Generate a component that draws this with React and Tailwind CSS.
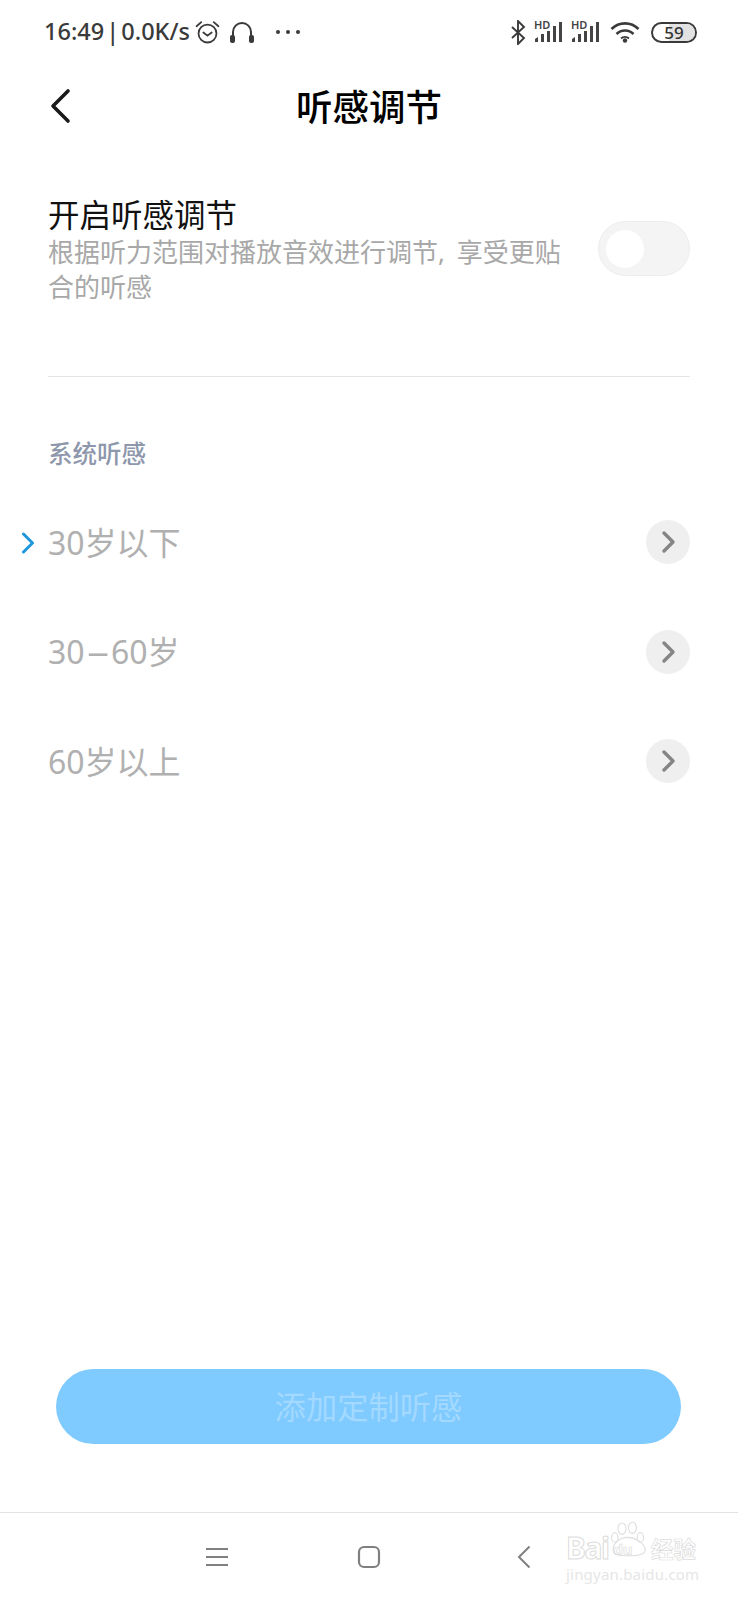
const FONT = "font-['Noto_Sans','Noto_Sans_CJK_SC',sans-serif]";

function Signal() {
  return (
    <div className="relative w-[28px] h-[22px]">
      <span className="absolute left-0 top-[-3px] text-[11px] leading-[14px] font-semibold text-[#444]">HD</span>
      <svg width="28" height="22" viewBox="0 0 28 22" className="absolute inset-0">
        <path d="M1 21v-3l3-2v5z" fill="#444" />
        <rect x="7" y="13" width="3" height="8" fill="#444" />
        <rect x="13" y="10" width="3" height="11" fill="#444" />
        <rect x="19" y="5" width="3" height="16" fill="#444" />
        <rect x="25" y="1" width="3" height="20" fill="#444" />
      </svg>
    </div>
  );
}

function StatusBar() {
  return (
    <div className="h-[64px] flex items-center pl-[44px] pr-[41px] text-[#3a3a3a] shrink-0">
      <span className="text-[23.5px] leading-none font-medium whitespace-nowrap w-[145px] [word-spacing:-4px]">16:49 | 0.0K/s</span>
      <svg width="25" height="25" viewBox="0 0 24 24" fill="none" stroke="#3a3a3a" strokeWidth="1.7" strokeLinecap="round" className="ml-[6px]">
        <circle cx="12" cy="13" r="8.6" />
        <path d="M8 12l4 3 4-3" />
        <path d="M1.5 6L6 2M22.5 6L18 2" />
      </svg>
      <svg width="26" height="24" viewBox="0 0 26 24" fill="none" className="ml-[9px]">
        <path d="M4 18V12a9 9 0 0 1 18 0v6" stroke="#3a3a3a" strokeWidth="2" />
        <rect x="1" y="15" width="5" height="8" rx="2" fill="#3a3a3a" />
        <rect x="20" y="15" width="5" height="8" rx="2" fill="#3a3a3a" />
      </svg>
      <svg width="26" height="6" viewBox="0 0 26 6" className="ml-[20px]">
        <circle cx="3" cy="3" r="2" fill="#3a3a3a" />
        <circle cx="13" cy="3" r="2" fill="#3a3a3a" />
        <circle cx="23" cy="3" r="2" fill="#3a3a3a" />
      </svg>
      <div className="ml-auto flex items-center">
        <svg width="15" height="25" viewBox="0 0 15 25" fill="none" stroke="#3a3a3a" strokeWidth="1.9">
          <path d="M1 7l12 11-6 6V1l6 6L1 18" />
        </svg>
        <div className="ml-[8px]"><Signal /></div>
        <div className="ml-[9px]"><Signal /></div>
        <svg width="30" height="22" viewBox="0 0 30 22" fill="none" stroke="#3a3a3a" strokeWidth="2.6" className="ml-[11px]">
          <path d="M1.5 8a19 19 0 0 1 27 0" />
          <path d="M6.5 13a12 12 0 0 1 17 0" />
          <path d="M11 17.5a6 6 0 0 1 8 0" strokeWidth="2" />
          <circle cx="15" cy="19.5" r="2.2" fill="#3a3a3a" stroke="none" />
        </svg>
        <div className="ml-[11px] w-[46px] h-[21px] rounded-full border-[2px] border-[#3a3a3a] relative overflow-hidden flex items-center justify-center">
          <div className="absolute right-0 top-0 bottom-0 w-[26px] bg-[#e2e2e2]" />
          <span className="relative text-[17px] leading-none font-medium text-[#333]">59</span>
        </div>
      </div>
    </div>
  );
}

function Row({ children, active }) {
  return (
    <div className="h-[109.5px] flex items-center justify-between relative">
      {active && (
        <svg width="14" height="22" viewBox="0 0 14 22" fill="none" stroke="#1f97dc" strokeWidth="3" strokeLinecap="round" strokeLinejoin="round" className="absolute left-[-27px] top-[44px]">
          <path d="M2.5 2l9 9-9 9" />
        </svg>
      )}
      <span className="text-[32px] leading-none text-[#b0b0b0] pt-[1px]">{children}</span>
      <div className="w-[44px] h-[44px] rounded-full bg-[#efefef] flex items-center justify-center">
        <svg width="16" height="24" viewBox="0 0 16 24" fill="none" stroke="#858585" strokeWidth="3.4" strokeLinecap="round" strokeLinejoin="round" className="ml-[2px]">
          <path d="M3 3l9 9-9 9" />
        </svg>
      </div>
    </div>
  );
}

function Watermark() {
  return (
    <div className="absolute left-[566px] top-[7px] w-[134px] h-[66px]">
      <svg width="40" height="38" viewBox="0 0 50 44" fill="none" stroke="#dedede" strokeWidth="1.4" className="absolute left-[44px] top-0">
        <ellipse cx="15" cy="9" rx="5" ry="7" />
        <ellipse cx="28" cy="8" rx="5" ry="7" />
        <ellipse cx="6" cy="20" rx="4" ry="6" />
        <ellipse cx="38" cy="20" rx="4" ry="6" />
        <path d="M4 36c0-10 9-16 18-16s22 7 22 16c0 6-11 7-21 7s-19-1-19-7z" />
      </svg>
      <div className="absolute left-0 top-[13px] flex items-start whitespace-nowrap">
        <span className="text-[30px] leading-none font-bold tracking-[-1.5px] text-transparent [-webkit-text-stroke:1px_#dcdcdc]">Bai</span>
        <span className="ml-[5px] mt-[9px] text-[15px] leading-none font-bold text-transparent [-webkit-text-stroke:0.7px_#dcdcdc]">du</span>
      </div>
      <span className="absolute left-[85px] top-[19px] text-[22.5px] leading-none font-bold text-transparent [-webkit-text-stroke:0.7px_#dcdcdc]">经验</span>
      <span className="absolute left-0 top-[47px] text-[15px] leading-none tracking-[0.2px] text-[#e6e6e6] whitespace-nowrap">jingyan.baidu.com</span>
    </div>
  );
}

export default function App() {
  return (
    <div className={`w-[738px] h-[1600px] bg-white flex flex-col overflow-hidden ${FONT}`}>
      <StatusBar />

      <div className="h-[86px] relative flex items-center justify-center shrink-0">
        <svg width="24" height="36" viewBox="0 0 24 36" fill="none" stroke="#1a1a1a" strokeWidth="3.6" strokeLinecap="round" strokeLinejoin="round" className="absolute left-[48px] top-[24px]">
          <path d="M20 3L5 18l15 15" />
        </svg>
        <h1 className="text-[36.5px] leading-none font-medium text-black pt-[1px]">听感调节</h1>
      </div>

      <div className="px-[48px] pt-[47px] shrink-0">
        <div className="flex items-start justify-between h-[180px] border-b border-[#e4e4e4]">
          <div className="w-[520px]">
            <div className="text-[31.5px] leading-[36px] text-[#111]">开启听感调节</div>
            <div className="text-[26px] leading-[35px] text-[#a8a8a8] mt-[2px] [word-spacing:5px]">根据听力范围对播放音效进行调节, 享受更贴合的听感</div>
          </div>
          <div className="w-[92px] h-[55px] rounded-[28px] bg-[#f4f4f4] border border-[#ededed] flex items-center pl-[7px] mt-[24px]">
            <div className="w-[38px] h-[38px] rounded-full bg-white" />
          </div>
        </div>

        <div className="text-[24.5px] leading-none font-medium text-[#8e97ab] mt-[65px]">系统听感</div>

        <div className="mt-[21px]">
          <Row active>30岁以下</Row>
          <Row>30<span className="inline-block px-[8px] scale-x-[2.4]">-</span>60岁</Row>
          <Row>60岁以上</Row>
        </div>
      </div>

      <div className="mt-auto pl-[56px] pr-[57px] shrink-0">
        <div className="h-[75px] rounded-full bg-[#7fcaff] flex items-center justify-center text-[31.3px] leading-none text-[#a3d9ff] pt-[3px]">添加定制听感</div>
      </div>

      <div className="mt-[68px] h-[88px] border-t border-[#e2e2e2] relative flex items-center shrink-0">
        <svg width="22" height="20" viewBox="0 0 22 20" fill="none" stroke="#808080" strokeWidth="2" className="ml-[206px]">
          <path d="M0 2h22M0 10h22M0 18h22" />
        </svg>
        <svg width="24" height="24" viewBox="0 0 24 24" fill="none" stroke="#808080" strokeWidth="2.2" className="ml-[129px]">
          <rect x="2" y="2" width="20" height="20" rx="5" />
        </svg>
        <svg width="14" height="24" viewBox="0 0 14 24" fill="none" stroke="#808080" strokeWidth="2" className="ml-[136px]">
          <path d="M12.5 1.5L2 12l10.5 10.5" />
        </svg>
        <Watermark />
      </div>
    </div>
  );
}
